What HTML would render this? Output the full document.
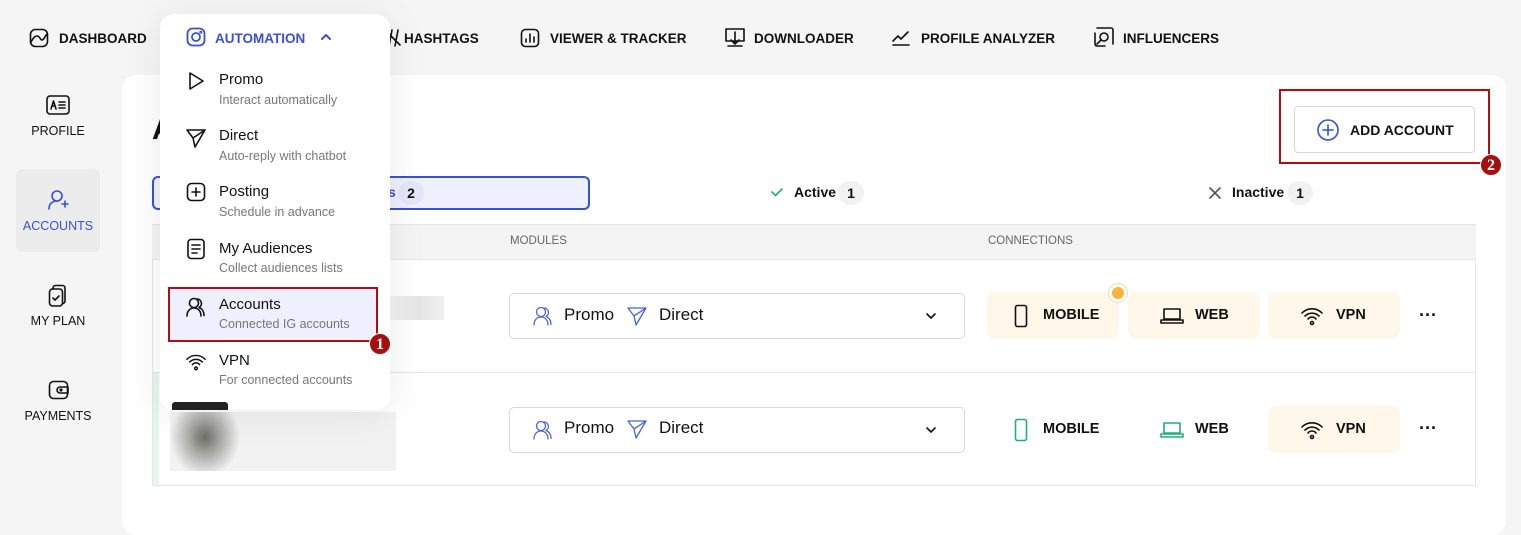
<!DOCTYPE html>
<html><head><meta charset="utf-8"><style>
*{box-sizing:border-box;margin:0;padding:0}
body{width:1521px;height:514px;background:#f5f5f5;font-family:"Liberation Sans",Arial,sans-serif;position:relative;overflow:hidden;color:#111}
.a{position:absolute}
.nav{font-weight:bold;font-size:13.5px;top:31px}
svg{position:absolute;fill:none;stroke:#111;stroke-width:1.6;stroke-linecap:round;stroke-linejoin:round}
.side{font-size:12.5px;width:84px;text-align:center;left:16px}
.card{left:122px;top:75px;width:1384px;height:460px;background:#fff;border-radius:14px}
.chip{height:47px;width:132px;background:#fff7ea;border-radius:8px;font-weight:bold;font-size:14.5px}
.chip span{position:absolute;top:15px}
.sel{left:509px;width:456px;height:46px;border:1px solid #d6d6de;border-radius:5px;background:#fff;font-size:17px}
.dd{left:160px;top:14px;width:230px;height:396px;background:#fff;border-radius:14px;box-shadow:0 4px 40px rgba(0,0,0,.08)}
.mi{font-size:15px;left:219px}
.ms{font-size:12.5px;color:#777;left:219px}
.badge{width:22px;height:22px;border-radius:50%;background:#a50f0f;color:#fff;font-weight:bold;font-size:16px;text-align:center;line-height:22px;font-family:"Liberation Serif",serif;border:1px solid #fff}
</style></head><body>
<svg style="left:29px;top:28px" width="20" height="20" viewBox="0 0 20 20"><rect x="1.5" y="1.5" width="17" height="17" rx="5"/><path d="M2 14c2-3 3-6 6-6s3 4 5 4 3-4 5-6"/></svg>
<div class="a nav" style="left:59px">DASHBOARD</div>
<svg style="left:383px;top:28px" width="20" height="20" viewBox="0 0 20 20"><path d="M3 3l14 14M9 2l-3 16M15 2l-3 16"/></svg>
<div class="a nav" style="left:404px">HASHTAGS</div>
<svg style="left:520px;top:28px" width="20" height="20" viewBox="0 0 20 20"><rect x="1.5" y="1.5" width="17" height="17" rx="4"/><path d="M6 14v-3M10 14V6M14 14V9"/></svg>
<div class="a nav" style="left:550px">VIEWER &amp; TRACKER</div>
<svg style="left:724px;top:26px" width="22" height="22" viewBox="0 0 22 22"><path d="M2 3h18v12H2zM11 6v12M7 14l4 4 4-4M4 20h14"/></svg>
<div class="a nav" style="left:754px">DOWNLOADER</div>
<svg style="left:891px;top:28px" width="20" height="20" viewBox="0 0 20 20"><path d="M2 13l5-5 3 3 7-7M2 17h16"/></svg>
<div class="a nav" style="left:921px">PROFILE ANALYZER</div>
<svg style="left:1093px;top:26px" width="22" height="22" viewBox="0 0 22 22"><path d="M4 2h14a2 2 0 0 1 2 2v14M2 7v11a2 2 0 0 0 2 2h8"/><circle cx="11" cy="11" r="4"/><path d="M8 14l-4 4"/></svg>
<div class="a nav" style="left:1123px">INFLUENCERS</div>

<svg style="left:46px;top:95px" width="24" height="20" viewBox="0 0 24 20"><rect x="1" y="1" width="22" height="18" rx="3"/><path d="M5 14l2.5-8 2.5 8M6 11h3M13 7h6M13 10h6M13 13h6"/></svg>
<div class="a side" style="top:124px">PROFILE</div>
<div class="a" style="left:16px;top:169px;width:84px;height:83px;background:#ececec;border-radius:6px"></div>
<svg style="left:47px;top:189px;stroke:#3a4fd8" width="22" height="22" viewBox="0 0 22 22"><circle cx="10" cy="7" r="5"/><path d="M2 20c0-5 3-8 8-8M15 15h6M18 12v6"/></svg>
<div class="a side" style="top:219px;color:#3a4fd8">ACCOUNTS</div>
<svg style="left:48px;top:284px" width="20" height="24" viewBox="0 0 20 24"><rect x="1.5" y="5" width="13" height="17" rx="3"/><path d="M5 5V4a2.5 2.5 0 0 1 2.5-2.5h7A2.5 2.5 0 0 1 17 4v13a2.5 2.5 0 0 1-2.5 2.5M5 14l2 2 4-4"/></svg>
<div class="a side" style="top:314px">MY PLAN</div>
<svg style="left:48px;top:380px" width="22" height="20" viewBox="0 0 22 20"><rect x="1.5" y="1.5" width="18" height="17" rx="4"/><path d="M12 7h8v6h-8a3 3 0 0 1 0-6z"/><circle cx="13" cy="10" r=".8"/></svg>
<div class="a side" style="top:409px">PAYMENTS</div>

<div class="a card"></div>
<div class="a" style="left:152px;top:113px;font-size:30px;font-weight:bold">A</div>
<div class="a" style="left:152px;top:176px;width:438px;height:34px;border:2px solid #3a4fd8;border-radius:6px;background:#eef0fd"></div>
<div class="a" style="left:388px;top:184px;font-size:14px;font-weight:bold;color:#3a4fd8">s</div>
<div class="a" style="left:398px;top:181px;width:26px;height:24px;border-radius:12px;background:#e4e7fa;font-weight:bold;font-size:14px;text-align:center;line-height:24px">2</div>
<svg style="left:770px;top:186px;stroke:#1fb07a" width="14" height="12" viewBox="0 0 14 12"><path d="M2 6l3.5 3.5L12 3"/></svg>
<div class="a" style="left:794px;top:184px;font-size:14px;font-weight:bold">Active</div>
<div class="a" style="left:838px;top:181px;width:26px;height:24px;border-radius:12px;background:#f2f2f2;font-weight:bold;font-size:14px;text-align:center;line-height:24px">1</div>
<svg style="left:1208px;top:186px;stroke:#555" width="14" height="14" viewBox="0 0 14 14"><path d="M2 2l10 10M12 2L2 12"/></svg>
<div class="a" style="left:1232px;top:184px;font-size:14px;font-weight:bold">Inactive</div>
<div class="a" style="left:1287px;top:181px;width:26px;height:24px;border-radius:12px;background:#f2f2f2;font-weight:bold;font-size:14px;text-align:center;line-height:24px">1</div>

<div class="a" style="left:1294px;top:106px;width:181px;height:47px;border:1px solid #d6d6de;border-radius:4px;background:#fff"></div>
<svg style="left:1316px;top:118px;stroke:#3a4fd8" width="24" height="24" viewBox="0 0 24 24"><circle cx="12" cy="12" r="10"/><path d="M12 7v10M7 12h10"/></svg>
<div class="a" style="left:1350px;top:122px;font-size:14px;font-weight:bold">ADD ACCOUNT</div>
<div class="a" style="left:1279px;top:89px;width:211px;height:75px;border:2px solid #b40d0d"></div>
<div class="a badge" style="left:1480px;top:154px">2</div>

<div class="a" style="left:152px;top:224px;width:1324px;height:36px;background:#f4f4f4;border-top:1px solid #e6e6e6;border-bottom:1px solid #e6e6e6"></div>
<div class="a" style="left:510px;top:235px;font-size:11.5px;color:#666">MODULES</div>
<div class="a" style="left:988px;top:235px;font-size:11.5px;color:#666">CONNECTIONS</div>
<div class="a" style="left:152px;top:260px;width:1324px;height:226px;border-left:1px solid #e6e6e6;border-right:1px solid #e6e6e6"></div>
<div class="a" style="left:152px;top:372px;width:1324px;height:1px;background:#e6e6e6"></div>
<div class="a" style="left:152px;top:485px;width:1324px;height:1px;background:#e6e6e6"></div>
<div class="a" style="left:153px;top:373px;width:6px;height:112px;background:#e6f5ee"></div>
<div class="a" style="left:390px;top:296px;width:54px;height:24px;background:linear-gradient(90deg,#f4f4f4,#e4e4e4,#f0f0f0)"></div>
<div class="a" style="left:170px;top:412px;width:226px;height:59px;background:radial-gradient(ellipse 35px 40px at 35px 25px,#6e6e66,#d8d8d8 80%,#f2f2f2)"></div>

<div class="a sel" style="top:293px"></div>
<div class="a sel" style="top:407px"></div>
<svg style="left:533px;top:305px;stroke:#4a63d8;stroke-width:1.3" width="20" height="22" viewBox="0 0 20 22"><circle cx="8" cy="7" r="4.5"/><path d="M1 20c0-5 3-8 7-8s7 3 7 8M11 3a4.5 4.5 0 0 1 2 8.5c3 1 5 4 5 8"/></svg>
<div class="a" style="left:564px;top:305px;font-size:17px">Promo</div>
<svg style="left:627px;top:306px;stroke:#4a63d8;stroke-width:1.3" width="20" height="20" viewBox="0 0 20 20"><path d="M1 2h18L9 19 7 10zM7 10l12-8"/></svg>
<div class="a" style="left:659px;top:305px;font-size:17px">Direct</div>
<svg style="left:925px;top:312px" width="12" height="8" viewBox="0 0 12 8"><path d="M2 2l4 4 4-4"/></svg>
<svg style="left:533px;top:419px;stroke:#4a63d8;stroke-width:1.3" width="20" height="22" viewBox="0 0 20 22"><circle cx="8" cy="7" r="4.5"/><path d="M1 20c0-5 3-8 7-8s7 3 7 8M11 3a4.5 4.5 0 0 1 2 8.5c3 1 5 4 5 8"/></svg>
<div class="a" style="left:564px;top:418px;font-size:17px">Promo</div>
<svg style="left:627px;top:419px;stroke:#4a63d8;stroke-width:1.3" width="20" height="20" viewBox="0 0 20 20"><path d="M1 2h18L9 19 7 10zM7 10l12-8"/></svg>
<div class="a" style="left:659px;top:418px;font-size:17px">Direct</div>
<svg style="left:925px;top:426px" width="12" height="8" viewBox="0 0 12 8"><path d="M2 2l4 4 4-4"/></svg>

<div class="a chip" style="left:987px;top:292px"><svg style="left:27px;top:12px" width="14" height="24" viewBox="0 0 14 24"><rect x="1.5" y="1.5" width="11" height="21" rx="2"/></svg><span style="left:56px">MOBILE</span></div>
<div class="a" style="left:1109px;top:284px;width:18px;height:18px;border-radius:50%;background:#fbb33a;border:3px solid #fff;box-shadow:0 0 0 1px #fcd9a0"></div>
<div class="a chip" style="left:1128px;top:292px"><svg style="left:32px;top:15px" width="24" height="18" viewBox="0 0 24 18"><path d="M4 2h16v10H4zM1 13h22v3H1z"/></svg><span style="left:67px">WEB</span></div>
<div class="a chip" style="left:1268px;top:292px"><svg style="left:33px;top:13px" width="22" height="22" viewBox="0 0 22 22"><path d="M1 8a14 14 0 0 1 20 0M4 11a10 10 0 0 1 14 0M7 14a5 5 0 0 1 8 0"/><circle cx="11" cy="18" r="1.5"/></svg><span style="left:68px">VPN</span></div>
<div class="a" style="left:1419px;top:305px;font-size:18px;font-weight:bold">···</div>
<div class="a chip" style="left:987px;top:406px;background:transparent"><svg style="left:27px;top:12px;stroke:#1fb07a" width="14" height="24" viewBox="0 0 14 24"><rect x="1.5" y="1.5" width="11" height="21" rx="2"/></svg><span style="left:56px">MOBILE</span></div>
<div class="a chip" style="left:1128px;top:406px;background:transparent"><svg style="left:32px;top:15px;stroke:#1fb07a" width="24" height="18" viewBox="0 0 24 18"><path d="M4 2h16v10H4zM1 13h22v3H1z"/></svg><span style="left:67px">WEB</span></div>
<div class="a chip" style="left:1268px;top:406px"><svg style="left:33px;top:13px" width="22" height="22" viewBox="0 0 22 22"><path d="M1 8a14 14 0 0 1 20 0M4 11a10 10 0 0 1 14 0M7 14a5 5 0 0 1 8 0"/><circle cx="11" cy="18" r="1.5"/></svg><span style="left:68px">VPN</span></div>
<div class="a" style="left:1419px;top:418px;font-size:18px;font-weight:bold">···</div>

<div class="a dd"></div>
<div class="a" style="left:172px;top:402px;width:56px;height:8px;background:#222;border-radius:3px 3px 0 0"></div>
<svg style="left:186px;top:27px;stroke:#3a4fd8;stroke-width:1.8" width="20" height="20" viewBox="0 0 20 20"><rect x="1.5" y="1.5" width="17" height="17" rx="5"/><circle cx="10" cy="10" r="4"/><circle cx="14.8" cy="5.2" r=".6"/></svg>
<div class="a nav" style="left:215px;color:#3a4fd8">AUTOMATION</div>
<svg style="left:320px;top:33px;stroke:#3a4fd8;stroke-width:2" width="12" height="8" viewBox="0 0 12 8"><path d="M2 6l4-4 4 4"/></svg>

<svg style="left:187px;top:71px" width="18" height="20" viewBox="0 0 18 20"><path d="M3 2l13 8-13 8z"/></svg>
<div class="a mi" style="top:71px">Promo</div><div class="a ms" style="top:93px">Interact automatically</div>
<svg style="left:186px;top:128px" width="20" height="20" viewBox="0 0 20 20"><path d="M1 2h18L9 19 7 10zM7 10l12-8"/></svg>
<div class="a mi" style="top:127px">Direct</div><div class="a ms" style="top:149px">Auto-reply with chatbot</div>
<svg style="left:186px;top:182px" width="20" height="20" viewBox="0 0 20 20"><rect x="1.5" y="1.5" width="17" height="17" rx="4"/><path d="M10 6v8M6 10h8"/></svg>
<div class="a mi" style="top:183px">Posting</div><div class="a ms" style="top:205px">Schedule in advance</div>
<svg style="left:186px;top:238px" width="20" height="22" viewBox="0 0 20 22"><rect x="2" y="1.5" width="16" height="19" rx="3"/><path d="M6 7h8M6 11h8M6 15h5"/></svg>
<div class="a mi" style="top:240px">My Audiences</div><div class="a ms" style="top:261px">Collect audiences lists</div>
<div class="a" style="left:168px;top:287px;width:210px;height:55px;background:#eef0fd;border:2px solid #b40d0d"></div>
<svg style="left:186px;top:296px" width="20" height="22" viewBox="0 0 20 22"><circle cx="8" cy="7" r="4.5"/><path d="M1 20c0-5 3-8 7-8s7 3 7 8M11 3a4.5 4.5 0 0 1 2 8.5c3 1 5 4 5 8"/></svg>
<div class="a mi" style="top:296px">Accounts</div><div class="a ms" style="top:317px">Connected IG accounts</div>
<div class="a badge" style="left:369px;top:333px">1</div>
<svg style="left:186px;top:352px" width="20" height="20" viewBox="0 0 22 22"><path d="M1 8a14 14 0 0 1 20 0M4 11a10 10 0 0 1 14 0M7 14a5 5 0 0 1 8 0"/><circle cx="11" cy="18" r="1.5"/></svg>
<div class="a mi" style="top:352px">VPN</div><div class="a ms" style="top:373px">For connected accounts</div>
</body></html>
